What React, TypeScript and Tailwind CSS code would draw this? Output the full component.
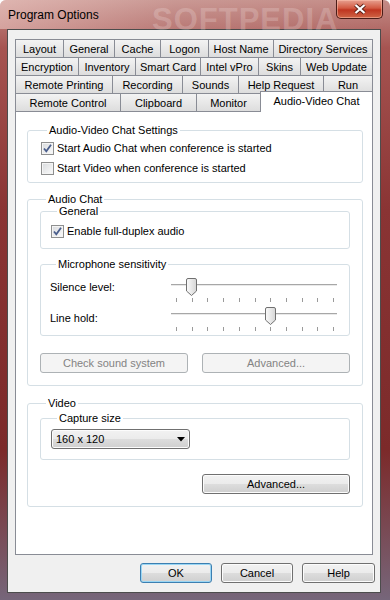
import React from 'react';

type Tab = { label: string; w: string };

const rows: Tab[][] = [
  [
    { label: 'Layout', w: 'w-[48px]' },
    { label: 'General', w: 'w-[51px]' },
    { label: 'Cache', w: 'w-[46px]' },
    { label: 'Logon', w: 'w-[48px]' },
    { label: 'Host Name', w: 'w-[65px]' },
    { label: 'Directory Services', w: 'w-[100px]' },
  ],
  [
    { label: 'Encryption', w: 'w-[63px]' },
    { label: 'Inventory', w: 'w-[57px]' },
    { label: 'Smart Card', w: 'w-[65px]' },
    { label: 'Intel vPro', w: 'w-[58px]' },
    { label: 'Skins', w: 'w-[42px]' },
    { label: 'Web Update', w: 'w-[73px]' },
  ],
  [
    { label: 'Remote Printing', w: 'w-[97px]' },
    { label: 'Recording', w: 'w-[70px]' },
    { label: 'Sounds', w: 'w-[56px]' },
    { label: 'Help Request', w: 'w-[85px]' },
    { label: 'Run', w: 'w-[50px]' },
  ],
  [
    { label: 'Remote Control', w: 'w-[105px]' },
    { label: 'Clipboard', w: 'w-[76px]' },
    { label: 'Monitor', w: 'w-[64px]' },
  ],
];

const btnBg =
  'bg-[linear-gradient(180deg,#f2f2f2_0%,#ebebeb_50%,#dddddd_50%,#cfcfcf_100%)] shadow-[inset_0_0_0_1px_#fcfcfc]';

const Check = ({ checked, label }: { checked?: boolean; label: string }) => (
  <div className="flex h-[20px] items-center gap-[3px]">
    <span className="flex h-[13px] w-[13px] items-center justify-center border border-[#8e8f8f] bg-[linear-gradient(135deg,#d8dadd,#fbfbfb)] shadow-[inset_0_0_0_1px_#f4f4f4]">
      {checked && (
        <svg width="11" height="11" viewBox="0 0 11 11">
          <path d="M2 5.5 L4.3 8.3 L9 1.8" fill="none" stroke="#4a5e8c" strokeWidth="1.8" />
        </svg>
      )}
    </span>
    <span>{label}</span>
  </div>
);

const Group = ({ title, className, children }: { title: string; className?: string; children: React.ReactNode }) => (
  <fieldset className={`rounded-[3px] border border-[#d5dfe5] ${className ?? ''}`}>
    <legend className="ml-[6px] px-[2px] leading-[12px]">{title}</legend>
    {children}
  </fieldset>
);

const Slider = ({ value }: { value: number }) => {
  const ticks = Array.from({ length: 11 }, (_, i) => i);
  return (
    <div className="relative h-[29px] w-[166px]">
      <div className="absolute left-0 right-0 top-[8px] h-[2px] border-t border-[#a7a7a7] bg-[#e9e9e9]" />
      {ticks.map((i) => (
        <div
          key={i}
          className="absolute top-[22px] h-[4px] w-px bg-[#9a9a9a]"
          style={{ left: 5 + i * 15.7 }}
        />
      ))}
      <svg
        className="absolute top-[2px]"
        style={{ left: 5 + value * 15.7 - 5.5 }}
        width="11"
        height="18"
        viewBox="0 0 11 18"
      >
        <defs>
          <linearGradient id={`th${value}`} x1="0" y1="0" x2="1" y2="0">
            <stop offset="0" stopColor="#fbfbfb" />
            <stop offset="1" stopColor="#d6d6d6" />
          </linearGradient>
        </defs>
        <path
          d="M0.5 2 Q0.5 0.5 2 0.5 H9 Q10.5 0.5 10.5 2 V13 L5.5 17.5 L0.5 13 Z"
          fill={`url(#th${value})`}
          stroke="#707070"
        />
      </svg>
    </div>
  );
};

const Button = ({ label, w, disabled, def }: { label: string; w: string; disabled?: boolean; def?: boolean }) => (
  <div
    className={`flex h-[20px] items-center justify-center rounded-[3px] border ${w} ${
      disabled
        ? 'border-[#adb2b5] bg-[#f4f4f4] text-[#838383]'
        : def
        ? `border-[#3c7fb1] bg-[linear-gradient(180deg,#f2f2f2_0%,#ebebeb_50%,#dddddd_50%,#cfcfcf_100%)] shadow-[inset_0_0_0_1px_#9ad6f4] text-black`
        : `border-[#707070] ${btnBg} text-black`
    }`}
  >
    {label}
  </div>
);

export default function App() {
  return (
    <div className="relative h-[600px] w-[390px] overflow-hidden rounded-t-[6px] bg-[linear-gradient(180deg,#c48d88_0%,#a65451_8%,#8a3434_35%,#7c2a2a_75%,#76667a_100%)] font-['Liberation_Sans',Arial,sans-serif] text-[11px] text-black">
      {/* title bar */}
      <div className="relative flex h-[29px] items-start bg-[linear-gradient(90deg,rgba(255,230,225,0.45)_0%,rgba(255,255,255,0.1)_45%,rgba(255,255,255,0)_100%)]">
        <span className="ml-[8px] mt-[8px] text-[12px] leading-[14px]">Program Options</span>
        <span className="pointer-events-none absolute left-[152px] top-[-3px] text-[31px] font-bold tracking-[1px] text-white/20">
          SOFTPEDIA
        </span>
        <div className="relative ml-auto mr-[7px] flex h-[19px] w-[47px] items-center justify-center rounded-b-[5px] border border-t-0 border-[#4a1d18] bg-[linear-gradient(180deg,#e7a090_0%,#d25a42_45%,#bf3520_55%,#cf6546_100%)] shadow-[inset_0_0_0_1px_rgba(255,200,180,0.5)]">
          <svg width="14" height="12" viewBox="0 0 14 12">
            <path d="M2.5 2 L11.5 10 M11.5 2 L2.5 10" stroke="#5a2218" strokeWidth="4" />
            <path d="M2.5 2 L11.5 10 M11.5 2 L2.5 10" stroke="#ffffff" strokeWidth="2.2" />
          </svg>
        </div>
      </div>

      {/* client area */}
      <div className="ml-[7px] h-[564px] w-[374px] border border-[#4c4c4c] bg-[#f0f0f0] pl-[7px] pt-[9px]">
        {/* tab rows */}
        <div className="flex flex-col">
          {rows.map((row, ri) => (
            <div key={ri} className="flex h-[18px] items-start">
              {row.map((t, ti) => (
                <div
                  key={t.label}
                  className={`flex h-[18px] items-center justify-center border-l border-t border-[#898c95] bg-[linear-gradient(180deg,#f3f3f3,#dddddd)] pt-px ${t.w} ${
                    ti === row.length - 1 && ri < 3 ? 'border-r' : ''
                  }`}
                >
                  {t.label}
                </div>
              ))}
              {ri === 3 && (
                <div className="relative z-10 -mt-[2px] flex h-[21px] w-[113px] items-center justify-center border-l border-r border-t border-[#898c95] bg-white pb-[2px]">
                  Audio-Video Chat
                </div>
              )}
            </div>
          ))}
        </div>

        {/* tab panel */}
        <div className="flex h-[444px] w-[358px] flex-col border border-[#898c95] bg-white pl-[11px] pr-[9px] pt-[12px]">
          <Group title="Audio-Video Chat Settings" className="pb-[4px] pl-[13px] pt-[2px]">
            <Check checked label="Start Audio Chat when conference is started" />
            <Check label="Start Video when conference is started" />
          </Group>

          <Group title="Audio Chat" className="mt-[10px] pb-[12px] pl-[12px] pr-[12px]">
            <Group title="General" className="pb-[7px] pl-[10px] pt-[4px]">
              <Check checked label="Enable full-duplex audio" />
            </Group>
            <Group title="Microphone sensitivity" className="mt-[9px] pb-px pl-[9px] pt-[6px]">
              <div className="flex">
                <span className="mt-[4px] w-[121px] leading-[14px]">Silence level:</span>
                <Slider value={1} />
              </div>
              <div className="flex">
                <span className="mt-[6px] w-[121px] leading-[14px]">Line hold:</span>
                <Slider value={6} />
              </div>
            </Group>
            <div className="mt-[17px] flex justify-between">
              <Button label="Check sound system" w="w-[148px]" disabled />
              <Button label="Advanced..." w="w-[148px]" disabled />
            </div>
          </Group>

          <Group title="Video" className="mt-[11px] pb-[12px] pl-[12px] pr-[12px]">
            <Group title="Capture size" className="mt-[3px] pb-[10px] pl-[10px] pt-[5px]">
              <div className={`flex h-[20px] w-[139px] items-center justify-between rounded-[3px] border border-[#707070] pl-[4px] pr-[4px] ${btnBg}`}>
                <span>160 x 120</span>
                <svg width="8" height="5" viewBox="0 0 8 5">
                  <path d="M0 0 H8 L4 4.5 Z" fill="#000" />
                </svg>
              </div>
            </Group>
            <div className="mt-[14px] flex justify-end">
              <Button label="Advanced..." w="w-[148px]" />
            </div>
          </Group>
        </div>

        {/* dialog buttons */}
        <div className="mt-[8px] flex justify-end gap-[9px] pr-[5px]">
          <Button label="OK" w="w-[72px]" def />
          <Button label="Cancel" w="w-[72px]" />
          <Button label="Help" w="w-[73px]" />
        </div>
      </div>
    </div>
  );
}
